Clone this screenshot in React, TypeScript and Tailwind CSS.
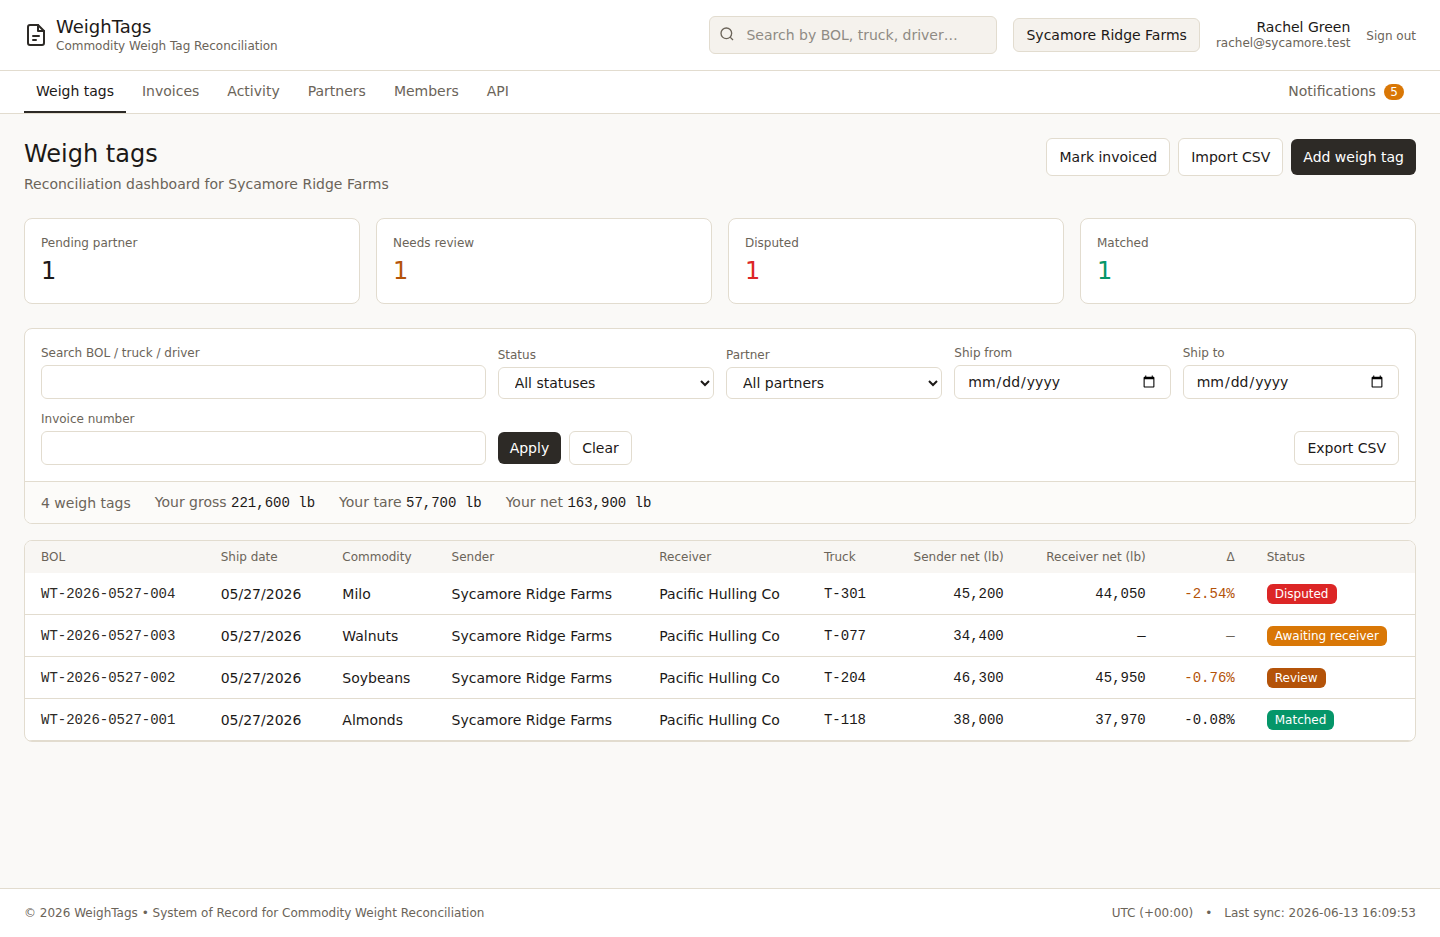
// WeighTags dashboard: reconciliation of commodity weigh tags.
const navLinks = ['Weigh tags', 'Invoices', 'Activity', 'Partners', 'Members', 'API'];

const stats = [
  { label: 'Pending partner', value: 1, color: 'text-[#1c1917]' },
  { label: 'Needs review', value: 1, color: 'text-[#b45309]' },
  { label: 'Disputed', value: 1, color: 'text-[#dc2626]' },
  { label: 'Matched', value: 1, color: 'text-[#059669]' },
];

const totals = [
  { label: 'Your gross', value: '221,600 lb' },
  { label: 'Your tare', value: '57,700 lb' },
  { label: 'Your net', value: '163,900 lb' },
];

const rows = [
  { bol: 'WT-2026-0527-004', commodity: 'Milo', truck: 'T-301', sent: '45,200', received: '44,050', delta: '-2.54%', deltaColor: 'text-[#b45309]', status: 'Disputed', badge: 'bg-[#dc2626]' },
  { bol: 'WT-2026-0527-003', commodity: 'Walnuts', truck: 'T-077', sent: '34,400', received: '—', delta: '—', deltaColor: 'text-[#6b6459]', status: 'Awaiting receiver', badge: 'bg-[#d97706]' },
  { bol: 'WT-2026-0527-002', commodity: 'Soybeans', truck: 'T-204', sent: '46,300', received: '45,950', delta: '-0.76%', deltaColor: 'text-[#b45309]', status: 'Review', badge: 'bg-[#b45309]' },
  { bol: 'WT-2026-0527-001', commodity: 'Almonds', truck: 'T-118', sent: '38,000', received: '37,970', delta: '-0.08%', deltaColor: 'text-[#1c1917]', status: 'Matched', badge: 'bg-[#059669]' },
];

const mono = "font-['Liberation_Mono',monospace]";
const label = 'mb-1 block text-xs text-[#6b6459]';
const field = 'block w-full rounded-md border border-[#e2dccf] bg-white px-3 py-1.5 text-sm';
const outlineButton = 'rounded-md border border-[#e2dccf] bg-white px-3 text-sm';
const darkButton = 'rounded-md bg-[#2d2a26] px-3 text-sm text-white';

function Header() {
  return (
    <header className="flex items-center justify-between border-b border-[#e2dccf] bg-white px-6 py-4">
      <div className="flex items-center gap-2">
        <svg className="h-6 w-6 text-[#2d2a26]" viewBox="0 0 24 24" fill="none" stroke="currentColor" strokeWidth="2" strokeLinecap="round" strokeLinejoin="round" aria-hidden="true">
          <path d="M14 2H6a2 2 0 0 0-2 2v16a2 2 0 0 0 2 2h12a2 2 0 0 0 2-2V8z" />
          <path d="M14 2v6h6" />
          <path d="M9 13h6M9 17h3" />
        </svg>
        <div>
          <div className="text-lg leading-[22px]">WeighTags</div>
          <div className="text-xs text-[#6b6459]">Commodity Weigh Tag Reconciliation</div>
        </div>
      </div>

      <div className="flex items-center gap-4">
        <div className="relative w-72">
          <svg className="absolute left-2.5 top-2.5 h-4 w-4 text-[#6b6459]" viewBox="0 0 24 24" fill="none" stroke="currentColor" strokeWidth="2" aria-hidden="true">
            <circle cx="11" cy="11" r="8" />
            <path d="M21 21l-4.35-4.35" />
          </svg>
          <input type="search" aria-label="Search" placeholder="Search by BOL, truck, driver…" className="block w-full rounded-md border border-[#e2dccf] bg-[#f5f2ed] py-2 pl-9 pr-3 text-sm placeholder:text-[#8f8b84]" />
        </div>
        <button type="button" className="rounded-md border border-[#e2dccf] bg-[#f5f2ed] px-3 py-1.5 text-sm">Sycamore Ridge Farms</button>
        <div className="text-right">
          <div className="text-sm leading-4">Rachel Green</div>
          <div className="text-xs text-[#6b6459]">rachel@sycamore.test</div>
        </div>
        <form>
          <button type="button" className="text-xs text-[#6b6459]">Sign out</button>
        </form>
      </div>
    </header>
  );
}

function Nav() {
  return (
    <nav className="flex items-center border-b border-[#e2dccf] bg-white px-6 text-sm text-[#6b6459]">
      <div className="flex flex-1 gap-1">
        {navLinks.map((name, i) => (
          <a key={name} href="#" className={i === 0 ? 'border-b-2 border-[#2d2a26] px-3 py-2.5 text-[#1c1917]' : 'border-b-2 border-transparent px-3 py-2.5'}>{name}</a>
        ))}
      </div>
      <a href="#" className="block border-b-2 border-transparent px-3 py-2.5">
        Notifications{' '}
        <span className="ml-1 inline-block rounded-full bg-[#d97706] px-1.5 text-xs text-white">5</span>
      </a>
    </nav>
  );
}

function Filters() {
  return (
    <section className="mb-4 overflow-hidden rounded-lg border border-[#e2dccf] bg-white">
      <form className="grid grid-cols-6 items-end gap-3 p-4">
        <div className="col-span-2">
          <label htmlFor="q" className={label}>Search BOL / truck / driver</label>
          <input id="q" type="text" className={field} />
        </div>
        <div>
          <label htmlFor="status" className={label}>Status</label>
          <select id="status" className={field}>
            <option>All statuses</option>
          </select>
        </div>
        <div>
          <label htmlFor="partner" className={label}>Partner</label>
          <select id="partner" className={field}>
            <option>All partners</option>
          </select>
        </div>
        <div>
          <label htmlFor="from" className={label}>Ship from</label>
          <input id="from" type="date" className={field} />
        </div>
        <div>
          <label htmlFor="to" className={label}>Ship to</label>
          <input id="to" type="date" className={field} />
        </div>
        <div className="col-span-2">
          <label htmlFor="invoice" className={label}>Invoice number</label>
          <input id="invoice" type="text" className={field} />
        </div>
        <div className="col-span-4 flex items-center gap-2">
          <button type="button" className={`${darkButton} py-1.5`}>Apply</button>
          <button type="button" className={`${outlineButton} py-1.5`}>Clear</button>
          <button type="button" className={`${outlineButton} ml-auto py-1.5`}>Export CSV</button>
        </div>
      </form>
      <div className="flex items-center gap-6 border-t border-[#e2dccf] bg-[#fcfbf9] px-4 py-2.5 text-sm text-[#6b6459]">
        <div>4 weigh tags</div>
        {totals.map((t) => (
          <div key={t.label}>{t.label} <span className={`${mono} text-[#1c1917]`}>{t.value}</span></div>
        ))}
      </div>
    </section>
  );
}

function TagTable() {
  return (
    <div className="overflow-hidden rounded-lg border border-[#e2dccf] bg-white">
      <table className="w-full text-sm">
        <thead className="bg-[#f8f6f3] text-left text-xs text-[#6b6459]">
          <tr>
            <th className="px-4 py-2 font-normal">BOL</th>
            <th className="px-4 py-2 font-normal">Ship date</th>
            <th className="px-4 py-2 font-normal">Commodity</th>
            <th className="px-4 py-2 font-normal">Sender</th>
            <th className="px-4 py-2 font-normal">Receiver</th>
            <th className="px-4 py-2 font-normal">Truck</th>
            <th className="px-4 py-2 text-right font-normal">Sender net (lb)</th>
            <th className="px-4 py-2 text-right font-normal">Receiver net (lb)</th>
            <th className="px-4 py-2 text-right font-normal">Δ</th>
            <th className="px-4 py-2 font-normal">Status</th>
          </tr>
        </thead>
        <tbody>
          {rows.map((r) => (
            <tr key={r.bol} className="border-b border-[#e2dccf]">
              <td className={`${mono} px-4 py-2.5`}><a href="#" className="text-[#2d2a26]">{r.bol}</a></td>
              <td className="px-4 py-2.5">05/27/2026</td>
              <td className="px-4 py-2.5">{r.commodity}</td>
              <td className="px-4 py-2.5">Sycamore Ridge Farms</td>
              <td className="px-4 py-2.5">Pacific Hulling Co</td>
              <td className={`${mono} px-4 py-2.5`}>{r.truck}</td>
              <td className={`${mono} px-4 py-2.5 text-right`}>{r.sent}</td>
              <td className={`${mono} px-4 py-2.5 text-right`}>{r.received}</td>
              <td className={`${mono} ${r.deltaColor} px-4 py-2.5 text-right`}>{r.delta}</td>
              <td className="px-4 py-2.5">
                <span className={`${r.badge} inline-block rounded-md px-2 py-0.5 text-xs text-white`}>{r.status}</span>
              </td>
            </tr>
          ))}
        </tbody>
      </table>
    </div>
  );
}

export default function App() {
  return (
    <div className="flex min-h-screen flex-col bg-[#faf9f7] font-['DejaVu_Sans',sans-serif] text-[#1c1917]">
      <Header />
      <Nav />
      <main className="flex-1 p-6">
        <div className="mb-6 flex items-start justify-between">
          <div>
            <h1 className="text-2xl">Weigh tags</h1>
            <p className="mt-1 text-sm text-[#6b6459]">Reconciliation dashboard for Sycamore Ridge Farms</p>
          </div>
          <div className="flex items-center gap-2">
            <button type="button" className={`${outlineButton} py-2`}>Mark invoiced</button>
            <button type="button" className={`${outlineButton} py-2`}>Import CSV</button>
            <button type="button" className={`${darkButton} py-2`}>Add weigh tag</button>
          </div>
        </div>

        <div className="mb-6 grid grid-cols-4 gap-4">
          {stats.map((s) => (
            <div key={s.label} className="rounded-lg border border-[#e2dccf] bg-white p-4">
              <div className="text-xs text-[#6b6459]">{s.label}</div>
              <div className={`${s.color} mt-1 text-2xl`}>{s.value}</div>
            </div>
          ))}
        </div>

        <Filters />
        <TagTable />
      </main>
      <footer className="flex items-center justify-between border-t border-[#e2dccf] bg-white px-6 py-4 text-xs text-[#6b6459]">
        <div>© 2026 WeighTags • System of Record for Commodity Weight Reconciliation</div>
        <div className="flex gap-3">
          <span>UTC (+00:00)</span>
          <span>•</span>
          <span>Last sync: 2026-06-13 16:09:53</span>
        </div>
      </footer>
    </div>
  );
}
